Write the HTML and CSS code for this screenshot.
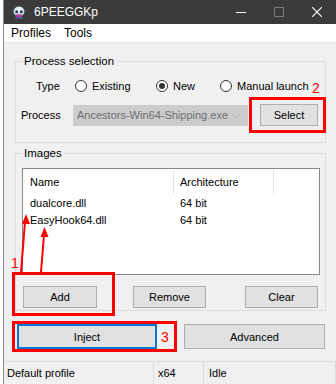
FILE: index.html
```html
<!DOCTYPE html>
<html lang="en">
<head>
  <meta charset="UTF-8">
  <title>6PEEGGKp</title>
  <link rel="stylesheet" href="styles.css">
</head>
<body>
  <div class="window">
    <div class="titlebar">
      <svg class="app-icon" width="12" height="13" viewBox="0 0 12 13">
        <ellipse cx="6" cy="5.5" rx="5.5" ry="5" fill="#b9d3e0"/>
        <ellipse cx="6" cy="4" rx="4" ry="3" fill="#e8f1f5"/>
        <rect x="2.5" y="4.5" width="2.5" height="2.5" fill="#2a3a4a"/>
        <rect x="7" y="4.5" width="2.5" height="2.5" fill="#2a3a4a"/>
        <rect x="3" y="8.5" width="6" height="3" fill="#c0399a"/>
        <rect x="2" y="11" width="8" height="2" fill="#3c5a8c"/>
      </svg>
      <span class="title">6PEEGGKp</span>
      <div class="caption-buttons">
        <span class="cap">
          <svg width="10" height="10" viewBox="0 0 10 10"><path d="M0 5.5h10" stroke="#fff" stroke-width="1"/></svg>
        </span>
        <span class="cap">
          <svg width="10" height="10" viewBox="0 0 10 10"><rect x="0.5" y="0.5" width="9" height="9" fill="none" stroke="#7a7a7a"/></svg>
        </span>
        <span class="cap">
          <svg width="10" height="10" viewBox="0 0 10 10"><path d="M0 0L10 10M10 0L0 10" stroke="#fff" stroke-width="1.1"/></svg>
        </span>
      </div>
    </div>

    <div class="menubar">
      <span class="menu-item">Profiles</span>
      <span class="menu-item">Tools</span>
    </div>

    <div class="content">
      <fieldset class="group group-process">
        <legend>Process selection</legend>
        <div class="type-row">
          <span class="type-label">Type</span>
          <label class="radio-option opt-existing"><span class="radio"></span>Existing</label>
          <label class="radio-option opt-new"><span class="radio checked"></span>New</label>
          <label class="radio-option"><span class="radio"></span>Manual launch</label>
        </div>
        <div class="process-row">
          <span class="process-label">Process</span>
          <div class="combo">
            <span class="combo-text">Ancestors-Win64-Shipping.exe</span>
            <svg class="combo-arrow" width="9" height="5" viewBox="0 0 9 5"><path d="M0.5 0.5L4.5 4.5L8.5 0.5" fill="none" stroke="#b5b5b5"/></svg>
          </div>
          <button class="btn btn-select">Select</button>
        </div>
      </fieldset>

      <fieldset class="group group-images">
        <legend>Images</legend>
        <div class="listview">
          <div class="lv-header">
            <span class="col col-name">Name</span>
            <span class="col col-arch">Architecture</span>
          </div>
          <div class="lv-row">
            <span class="col col-name">dualcore.dll</span>
            <span class="col col-arch">64 bit</span>
          </div>
          <div class="lv-row">
            <span class="col col-name">EasyHook64.dll</span>
            <span class="col col-arch">64 bit</span>
          </div>
        </div>
        <div class="image-buttons">
          <button class="btn btn-add">Add</button>
          <button class="btn btn-remove">Remove</button>
          <button class="btn btn-clear">Clear</button>
        </div>
      </fieldset>

      <div class="inject-row">
        <button class="btn btn-inject">Inject</button>
        <button class="btn btn-advanced">Advanced</button>
      </div>
    </div>

    <div class="statusbar">
      <span class="status-cell status-profile">Default profile</span>
      <span class="status-cell status-arch">x64</span>
      <span class="status-cell status-state">Idle</span>
    </div>
  </div>

  <!-- red annotations drawn over the screenshot -->
  <svg class="annotations" width="336" height="384" viewBox="0 0 336 384">
    <g fill="none" stroke="#ff0000" stroke-width="3">
      <rect x="250.5" y="98.5" width="74" height="33"/>
      <rect x="13.5" y="273.5" width="100" height="41"/>
      <rect x="13.5" y="322.5" width="162" height="28"/>
    </g>
    <g stroke="#ff0000" stroke-width="2">
      <line x1="21" y1="272" x2="25" y2="222"/>
      <line x1="41" y1="272" x2="44" y2="235"/>
    </g>
    <g fill="#ff0000">
      <polygon points="26,214 22,224 30,224"/>
      <polygon points="44.5,227 40.5,237 48.5,237"/>
    </g>
    <g class="note" fill="#ff0000">
      <text x="11" y="268">1</text>
      <text x="312" y="93">2</text>
      <text x="161" y="342">3</text>
    </g>
  </svg>
</body>
</html>
```

FILE: styles.css
```css
body {
  margin: 0;
  background-color: #ffffff;
  font-family: 'Liberation Sans', Arial, sans-serif;
  font-size: 11px;
  color: #000;
  position: relative;
  width: 336px;
  height: 384px;
  overflow: hidden;
}

.window {
  margin-left: 3px;
  border-left: 1px solid #8a8a8a;
  height: 384px;
  background-color: #f0f0f0;
  display: flex;
  flex-direction: column;
}

.titlebar {
  height: 24px;
  background-color: #3b3b3b;
  color: #ffffff;
  display: flex;
  align-items: center;
  padding-left: 9px;
}

.app-icon {
  margin-right: 9px;
}

.title {
  font-size: 12px;
  flex: 1;
}

.caption-buttons {
  display: flex;
  height: 24px;
}

.cap {
  width: 38px;
  display: flex;
  align-items: center;
  justify-content: center;
}

.menubar {
  height: 18px;
  background-color: #ffffff;
  border-bottom: 1px solid #e6e6e6;
  display: flex;
  align-items: center;
  padding-left: 7px;
  font-size: 12px;
}

.menu-item {
  margin-right: 13px;
}

.content {
  flex: 1;
  padding: 11px 10px 0 11px;
}

.group {
  margin: 0;
  padding: 0;
  border: 1px solid #dcdcdc;
  min-width: 0;
}

.group legend {
  margin-left: 6px;
  padding: 0 2px;
  line-height: 14px;
  font-size: 11.5px;
}

.type-row {
  display: flex;
  align-items: center;
  height: 16px;
  margin-top: 10px;
}

.type-label {
  width: 39px;
  padding-left: 20px;
}

.radio-option {
  display: flex;
  align-items: center;
  white-space: nowrap;
}

.opt-existing {
  width: 81px;
}

.opt-new {
  width: 64px;
}

.radio {
  width: 10px;
  height: 10px;
  border: 1px solid #333;
  border-radius: 50%;
  background-color: #fff;
  margin-right: 5px;
  position: relative;
  flex-shrink: 0;
}

.radio.checked::after {
  content: "";
  position: absolute;
  left: 2px;
  top: 2px;
  width: 6px;
  height: 6px;
  border-radius: 50%;
  background-color: #333;
}

.process-row {
  display: flex;
  align-items: center;
  margin-top: 10px;
  margin-bottom: 16px;
}

.process-label {
  width: 52px;
  padding-left: 5px;
}

.combo {
  width: 175px;
  height: 21px;
  box-sizing: border-box;
  background-color: #cccccc;
  border: 1px solid #cccccc;
  display: flex;
  align-items: center;
  padding: 0 7px 0 3px;
  color: #6d6d6d;
}

.combo-text {
  flex: 1;
  white-space: nowrap;
  overflow: hidden;
}

.btn {
  font-family: inherit;
  font-size: 11px;
  color: #000;
  background-color: #e1e1e1;
  border: 1px solid #adadad;
  border-radius: 0;
  padding: 0;
  height: 22px;
}

.btn-select {
  width: 58px;
  margin-left: 12px;
}

.group-images {
  margin-top: 3px;
}

.listview {
  margin: 8px 0 0 6px;
  width: 298px;
  height: 107px;
  box-sizing: border-box;
  border: 1px solid #828790;
  background-color: #ffffff;
}

.lv-header {
  display: flex;
  height: 24px;
  margin-top: 1px;
  align-items: center;
  background: linear-gradient(#e5e5e5, #e5e5e5) 150px 0 / 1px 100% no-repeat,
              linear-gradient(#e5e5e5, #e5e5e5) 250px 0 / 1px 100% no-repeat;
}

.lv-row {
  display: flex;
  height: 17px;
  align-items: center;
}

.col-name {
  width: 143px;
  padding-left: 7px;
}

.col-arch {
  padding-left: 7px;
}

.image-buttons {
  display: flex;
  margin: 11px 0 2px 7px;
}

.btn-add {
  width: 74px;
}

.btn-remove {
  width: 73px;
  margin-left: 36px;
}

.btn-clear {
  width: 73px;
  margin-left: 39px;
}

.inject-row {
  display: flex;
  margin-top: 13px;
  margin-left: 2px;
}

.btn-inject {
  width: 140px;
  height: 25px;
  border: 2px solid #0078d7;
}

.btn-advanced {
  width: 141px;
  height: 25px;
  margin-left: 27px;
}

.statusbar {
  height: 22px;
  border-top: 1px solid #dcdcdc;
  display: flex;
  align-items: center;
}

.status-cell {
  height: 22px;
  display: flex;
  align-items: center;
  border-right: 1px solid #dcdcdc;
  box-sizing: border-box;
}

.status-profile {
  width: 150px;
  padding-left: 3px;
}

.status-arch {
  width: 50px;
  padding-left: 4px;
}

.status-state {
  flex: 1;
  padding-left: 5px;
}

.annotations {
  position: absolute;
  left: 0;
  top: 0;
  pointer-events: none;
}

.note {
  font-family: 'Liberation Sans', Arial, sans-serif;
  font-size: 14px;
}
```
